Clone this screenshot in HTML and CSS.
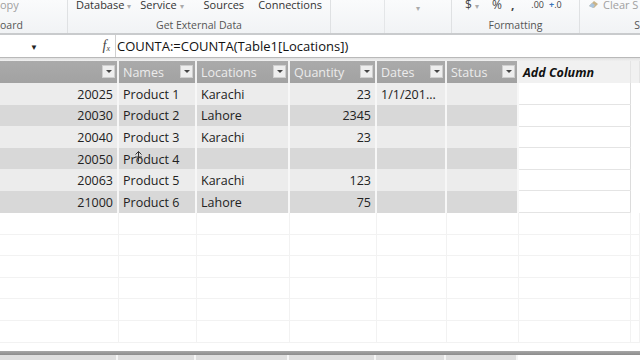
FILE: index.html
```html
<!DOCTYPE html>
<html>
<head>
<meta charset="utf-8">
<link rel="stylesheet" href="styles.css">
</head>
<body>
<div class="ribbon">
  <div class="grp g-clip">
    <div class="top"><span class="dis">opy</span></div>
    <div class="lbl left">oard</div>
  </div>
  <div class="grp g-ext">
    <div class="top">
      <span class="it i-db">Database <i class="dd">▾</i></span>
      <span class="it i-sv">Service <i class="dd">▾</i></span>
      <span class="it i-src">Sources</span>
      <span class="it i-con">Connections</span>
    </div>
    <div class="lbl ext-lbl">Get External Data</div>
  </div>
  <div class="grp g-mid">
    <div class="sub"></div>
    <div class="sub2"><i class="dd">▾</i></div>
  </div>
  <div class="grp g-fmt">
    <div class="top fmt-top">
      <span class="f-dollar">$ <i class="dd">▾</i></span>
      <span class="f-pct">%</span>
      <span class="f-com">,</span>
      <span class="f-dec">.00</span>
      <span class="f-dec2"><b>+</b>.0</span>
    </div>
    <div class="lbl">Formatting</div>
  </div>
  <div class="grp g-last">
    <div class="top clr-top">
      <svg class="eraser" width="12" height="10" viewBox="0 0 12 10"><path d="M1 7 L6 2 L10 5 L6 9 Z" fill="#c9b48a"/><path d="M1 7 L4 4 L7 6 L5 9 Z" fill="#a9c4de"/></svg>
      <span class="dis">Clear S</span>
    </div>
    <div class="lbl right">S</div>
  </div>
</div>

<div class="fbar">
  <div class="namebox"><span class="nb-arrow">▼</span><span class="fx">f<sub>x</sub></span></div>
  <div class="ftext">COUNTA:=COUNTA(Table1[Locations])</div>
</div>
<div class="strip"></div>

<table class="grid">
  <colgroup>
    <col style="width:118px"><col style="width:78px"><col style="width:93px"><col style="width:87px"><col style="width:70px"><col style="width:72px"><col style="width:112px"><col>
  </colgroup>
  <thead>
    <tr>
      <th class="h"><span class="btn"></span></th>
      <th class="h">Names<span class="btn"></span></th>
      <th class="h">Locations<span class="btn"></span></th>
      <th class="h">Quantity<span class="btn"></span></th>
      <th class="h">Dates<span class="btn"></span></th>
      <th class="h">Status<span class="btn"></span></th>
      <th class="add">Add Column</th>
      <th class="add"></th>
    </tr>
  </thead>
  <tbody>
    <tr class="odd"><td class="num">20025</td><td>Product 1</td><td>Karachi</td><td class="num">23</td><td>1/1/201...</td><td></td><td class="w"></td><td class="e"></td></tr>
    <tr class="even"><td class="num">20030</td><td>Product 2</td><td>Lahore</td><td class="num">2345</td><td></td><td></td><td class="w"></td><td class="e"></td></tr>
    <tr class="odd"><td class="num">20040</td><td>Product 3</td><td>Karachi</td><td class="num">23</td><td></td><td></td><td class="w"></td><td class="e"></td></tr>
    <tr class="even"><td class="num">20050</td><td>Product 4</td><td></td><td class="num"></td><td></td><td></td><td class="w"></td><td class="e"></td></tr>
    <tr class="odd"><td class="num">20063</td><td>Product 5</td><td>Karachi</td><td class="num">123</td><td></td><td></td><td class="w"></td><td class="e"></td></tr>
    <tr class="even"><td class="num">21000</td><td>Product 6</td><td>Lahore</td><td class="num">75</td><td></td><td></td><td class="w"></td><td class="e"></td></tr>
    <tr class="blank"><td></td><td></td><td></td><td></td><td></td><td></td><td></td><td></td></tr>
    <tr class="blank"><td></td><td></td><td></td><td></td><td></td><td></td><td></td><td></td></tr>
    <tr class="blank"><td></td><td></td><td></td><td></td><td></td><td></td><td></td><td></td></tr>
    <tr class="blank"><td></td><td></td><td></td><td></td><td></td><td></td><td></td><td></td></tr>
    <tr class="blank"><td></td><td></td><td></td><td></td><td></td><td></td><td></td><td></td></tr>
    <tr class="blank"><td></td><td></td><td></td><td></td><td></td><td></td><td></td><td></td></tr>
  </tbody>
</table>
<div class="hbar"></div>
<div class="bottom">
  <span style="width:118px"></span><span style="width:78px"></span><span style="width:93px"></span><span style="width:87px"></span><span style="width:70px"></span><span style="width:72px"></span>
</div>

<svg class="cursor" width="9" height="11" viewBox="0 0 9 11"><path d="M4.5 0.5 L4.5 10.5 M1.5 3.5 L4.5 0.5 L7.5 3.5 M1 6 L8 6" stroke="#333" stroke-width="1" fill="none"/></svg>
</body>
</html>
```

FILE: styles.css
```css
* { box-sizing: border-box; }
html, body { margin: 0; padding: 0; }
body {
  width: 640px; height: 360px; overflow: hidden; position: relative;
  background: #fff;
  font-family: "Open Sans", "Noto Sans", sans-serif;
  color: #222;
}
.ribbon {
  height: 35px; display: flex;
  background: linear-gradient(#fafbfc, #f1f3f5);
  border-bottom: 2px solid #c9cbcd;
  font-size: 11px; color: #333;
  overflow: hidden;
}
.grp { position: relative; height: 33px; border-right: 1px solid #dfe1e3; display: flex; flex-direction: column; }
.top { height: 19px; line-height: 10px; margin-top: 0; white-space: nowrap; display: flex; }
.lbl { height: 14px; line-height: 12px; text-align: center; color: #555; font-size: 10.5px; }
.lbl.left { text-align: left; }
.lbl.right { text-align: right; }
.dis { color: #a0a0a0; }
.dd { font-style: normal; color: #aaa; font-size: 8px; }
.g-clip { width: 68px; }
.g-ext { width: 263px; }
.it { position: relative; }
.i-db { margin-left: 8px; }
.i-sv { margin-left: 9px; }
.i-src { margin-left: 20px; }
.i-con { margin-left: 14px; }
.ext-lbl { padding-left: 0; }
.g-mid { width: 121px; flex-direction: row; }
.g-mid .sub { width: 54px; border-right: 1px solid #e4e6e8; height: 33px; }
.g-mid .sub2 { flex: 1; text-align: center; line-height: 10px; padding-top: 2px; }
.g-fmt { width: 128px; }
.fmt-top { font-size: 12px; color: #444; }
.f-dollar { margin-left: 13px; }
.f-pct { margin-left: 13px; }
.f-com { margin-left: 9px; font-weight: bold; }
.f-dec { margin-left: 17px; font-size: 9px; }
.f-dec2 { margin-left: 5px; font-size: 9px; }
.f-dec2 b { color: #3a74b9; }
.g-last { flex: 1; border-right: none; }
.clr-top { padding-left: 8px; align-items: flex-start; gap: 3px; font-size: 11px; }
.eraser { margin-top: -1px; }

.fbar {
  height: 23px; display: flex; background: #fff;
  border-bottom: 1px solid #b9b9b9;
}
.namebox { width: 116px; border-right: 1px solid #cfcfcf; position: relative; display: flex; align-items: center; }
.nb-arrow { font-size: 8px; margin-left: 30px; color: #222; }
.fx { margin-left: auto; margin-right: 5px; font-family: "Liberation Serif", serif; font-style: italic; font-size: 14px; color: #444; }
.fx sub { font-size: 8px; vertical-align: -1px; }
.ftext { padding-left: 1px; font-size: 13px; line-height: 22px; color: #111; white-space: nowrap; }
.strip { height: 3px; background: linear-gradient(#e0e0e0, #f0f0f0); }

.grid { border-collapse: collapse; table-layout: fixed; width: 640px; font-size: 12.5px; }
.grid th, .grid td { padding: 0 4px; white-space: nowrap; overflow: hidden; }
.grid th { height: 22px; font-weight: normal; text-align: left; }
.grid th.h {
  background: linear-gradient(#aaaaaa, #a2a2a2); color: #ececec;
  border-right: 2px solid #f2f2f2; position: relative;
}
.btn {
  position: absolute; right: 2px; top: 4px; width: 13px; height: 13px;
  background: #eeeeee; border: 1px solid #cfcfcf;
}
.btn::after {
  content: ""; position: absolute; left: 3px; top: 4px;
  border-left: 3px solid transparent; border-right: 3px solid transparent; border-top: 3px solid #444;
}
.grid th.add { background: #f1f1f1; color: #111; font-weight: bold; font-style: italic; border-right: 1px solid #e4e4e4; }
.grid td { height: 21.6px; border-right: 2px solid #f7f7f7; padding-top: 1px; }
.odd td { background: #ececec; }
.even td { background: #d8d8d8; }
.grid td.num { text-align: right; }
.grid td.w { background: #fff; border-right: 1px solid #dcdcdc; border-bottom: 1px solid #e4e4e4; }
.grid td.e { background: #fff; border-right: none; }
.blank td { background: #fff; height: 21.6px; border-right: 1px solid #f2f2f2; border-bottom: 1px solid #f2f2f2; }
.hbar { position: absolute; left: 0; top: 351px; width: 640px; height: 4px; background: linear-gradient(#a6a6a6, #8c8c8c); }
.bottom { position: absolute; left: 0; top: 355px; display: flex; height: 5px; }
.bottom span { display: block; height: 5px; background: #dedede; border-right: 2px solid #f5f5f5; }
.cursor { position: absolute; left: 134px; top: 151px; }
```
